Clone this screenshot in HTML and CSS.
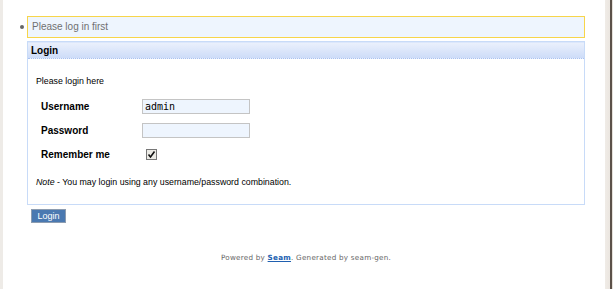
FILE: index.html
```html
<!DOCTYPE html>
<html>
  <head>
    <title>Login</title>
    <link rel="stylesheet" href="styles.css">
  </head>
  <body>
    <div class="frame">
      <div class="page">

        <ul class="messages">
          <li><span class="bullet"></span><span class="message">Please log in first</span></li>
        </ul>

        <form id="login">
          <div class="panel">
            <div class="panel-header">Login</div>
            <div class="panel-body">
              <p class="intro">Please login here</p>

              <div class="fields">
                <label for="username">Username</label>
                <input id="username" type="text" value="admin">

                <label for="password">Password</label>
                <input id="password" type="password">

                <label for="remember">Remember me</label>
                <span class="check" id="remember">
                  <svg width="9" height="9" viewBox="0 0 9 9">
                    <path d="M1.5 4.5 L3.5 7 L7.5 1.5" fill="none" stroke="#111" stroke-width="1.6"/>
                  </svg>
                </span>
              </div>

              <p class="note"><em>Note</em> - You may login using any username/password combination.</p>
            </div>
          </div>

          <div class="actions">
            <button type="button">Login</button>
          </div>
        </form>

        <div class="footer">
          Powered by <a href="#">Seam</a>. Generated by seam-gen.
        </div>
      </div>
      <div class="edge"></div>
    </div>
  </body>
</html>
```

FILE: styles.css
```css
*,
*:before,
*:after {
  box-sizing: border-box;
}

html,
body {
  margin: 0;
  padding: 0;
  background: #fff;
  font-family: "Liberation Sans", Arial, sans-serif;
  color: #000;
}

.frame {
  display: flex;
  height: 289px;
  border-left: 3px solid #eeebe7;
}

.page {
  flex: 1;
  padding: 16px 20px 0 24px;
}

.edge {
  width: 8px;
  background: linear-gradient(to right, #f0ece7 0, #ebe6e0 5px, #5c5149 5px, #5c5149 7px, #e6e1da 7px);
}

/* status messages */
.messages {
  list-style: none;
  margin: 0;
  padding: 0;
}

.messages li {
  display: flex;
  align-items: center;
  gap: 3px;
  margin-left: -7px;
}

.bullet {
  width: 4px;
  height: 4px;
  border-radius: 50%;
  background: #666;
}

.message {
  flex: 1;
  height: 22px;
  line-height: 20px;
  padding-left: 4px;
  border: 1px solid #f7d54a;
  background: #eef5fe;
  color: #707070;
  font-size: 10px;
}

/* login panel */
.panel {
  margin-top: 3px;
  border: 1px solid #c8dbf8;
}

.panel-header {
  height: 17px;
  line-height: 15px;
  padding-left: 3px;
  border-top: 1px solid #dce7fb;
  border-bottom: 1px dotted #a9c2f0;
  background: linear-gradient(#eaf0fc, #cddcf8);
  font-size: 10px;
  font-weight: bold;
}

.panel-body {
  padding: 16px 8px 16px 8px;
  font-size: 8.8px;
}

.intro,
.note {
  margin: 0;
  line-height: 12px;
}

.fields {
  display: grid;
  grid-template-columns: 101px 108px;
  grid-auto-rows: 15px;
  row-gap: 9px;
  align-items: center;
  margin: 12px 0 14px 5px;
}

.fields label {
  font-size: 10px;
  font-weight: bold;
}

.fields input {
  width: 108px;
  height: 15px;
  margin: 0;
  padding: 0 2px;
  border: 1px solid #c4c4c4;
  background: #eef5fe;
  font-family: "DejaVu Sans Mono", monospace;
  font-size: 10px;
  color: #000;
}

.check {
  display: flex;
  align-items: center;
  justify-content: center;
  width: 11px;
  height: 11px;
  margin-left: 4px;
  border: 1px solid #777;
  background: #ecebe6;
}

/* form actions */
.actions {
  display: flex;
  margin: 4px 0 0 4px;
}

.actions button {
  width: 35px;
  height: 14px;
  padding: 0;
  border: 1px solid #8c9cb0;
  background: #4a79b1;
  color: #fff;
  font-family: "Liberation Sans", Arial, sans-serif;
  font-size: 9px;
  line-height: 12px;
}

/* footer */
.footer {
  margin-top: 29px;
  line-height: 12px;
  text-align: center;
  font-family: "DejaVu Sans", Verdana, sans-serif;
  font-size: 7.2px;
  letter-spacing: 0.25px;
  color: #666;
}

.footer a {
  color: #2060b0;
  font-weight: bold;
}
```
